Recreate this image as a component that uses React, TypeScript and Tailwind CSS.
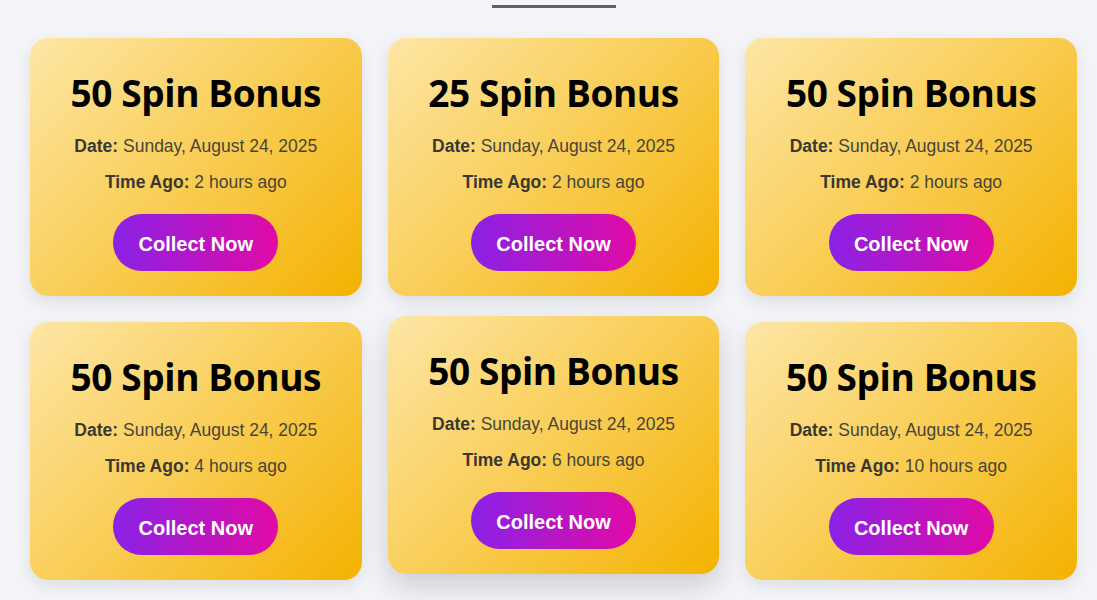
import React from 'react';

type Bonus = {
  title: string;
  date: string;
  ago: string;
  lifted?: boolean;
};

const bonuses: Bonus[] = [
  { title: '50 Spin Bonus', date: 'Sunday, August 24, 2025', ago: '2 hours ago' },
  { title: '25 Spin Bonus', date: 'Sunday, August 24, 2025', ago: '2 hours ago' },
  { title: '50 Spin Bonus', date: 'Sunday, August 24, 2025', ago: '2 hours ago' },
  { title: '50 Spin Bonus', date: 'Sunday, August 24, 2025', ago: '4 hours ago' },
  { title: '50 Spin Bonus', date: 'Sunday, August 24, 2025', ago: '6 hours ago', lifted: true },
  { title: '50 Spin Bonus', date: 'Sunday, August 24, 2025', ago: '10 hours ago' },
];

const BonusCard: React.FC<{ bonus: Bonus }> = ({ bonus }) => {
  return (
    <div
      className={
        'flex flex-col items-center rounded-[18px] bg-linear-135/srgb from-[#fde6a6] via-[#f9cd55] to-[#f4b200] pt-[32px] pb-[25px] ' +
        (bonus.lifted
          ? '-translate-y-[6px] shadow-[0_12px_28px_rgba(0,0,0,0.16)]'
          : 'shadow-[0_6px_16px_rgba(0,0,0,0.09)]')
      }
    >
      <h2 className="h-[46px] text-[37px] leading-[46px] font-bold text-black font-['Open_Sans',sans-serif] tracking-[-0.4px]">
        {bonus.title}
      </h2>
      <p className="mt-[17px] text-[17.5px] leading-[27px] text-[#474538] font-['Liberation_Sans',Arial,sans-serif]">
        <span className="font-bold text-[#3a382e]">Date:</span> {bonus.date}
      </p>
      <p className="mt-[9px] text-[17.5px] leading-[27px] text-[#474538] font-['Liberation_Sans',Arial,sans-serif]">
        <span className="font-bold text-[#3a382e]">Time Ago:</span> {bonus.ago}
      </p>
      <button className="mt-[18px] flex h-[57px] w-[165px] items-center justify-center rounded-full bg-linear-to-r/srgb from-[#8a22e6] to-[#e10aa6] pt-[2px] text-[20px] font-bold text-white font-['Liberation_Sans',Arial,sans-serif]">
        Collect Now
      </button>
    </div>
  );
};

const App: React.FC = () => {
  return (
    <div className="min-h-[600px] bg-[#f2f4f7] pl-[30px] pr-[20px] pt-[5px]">
      <div className="flex justify-center">
        <div className="h-[3px] w-[124px] bg-[#5f6166]" />
      </div>
      <div className="mt-[30px] grid grid-cols-3 gap-x-[26px] gap-y-[26px]">
        {bonuses.map((b, i) => (
          <BonusCard key={i} bonus={b} />
        ))}
      </div>
    </div>
  );
};

export default App;
